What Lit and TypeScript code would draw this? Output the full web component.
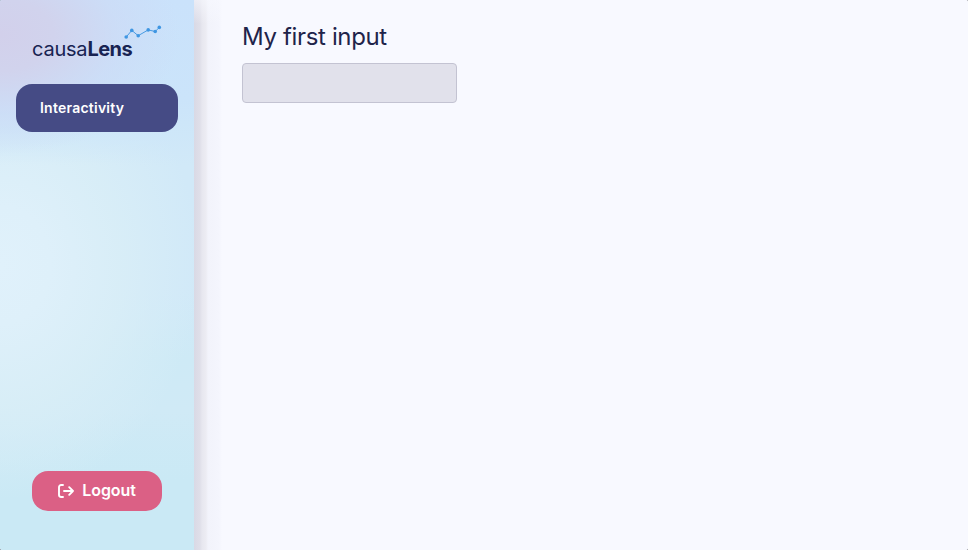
import { LitElement, html, css, svg } from "lit";
import { customElement } from "lit/decorators.js";

const SPARK: Array<[number, number]> = [
  [2.2, 12], [7.8, 5.4], [14.2, 10.7], [24.2, 4.9], [31.2, 6.5], [35.3, 2.4],
];

@customElement("brand-logo")
class BrandLogo extends LitElement {
  static styles = css`
    :host { display: block; position: relative; height: 36px; color: #182352; }
    .word { position: absolute; left: 0; top: 11px; font-size: 20px; line-height: 26px; white-space: nowrap; display: flex; }
    .light { letter-spacing: -0.22px; font-weight: 400; }
    .bold { letter-spacing: -0.55px; font-weight: 700; }
    .spark { position: absolute; left: 92px; top: 0; }
  `;
  render() {
    return html`
      <div class="word"><span class="light">causa</span><span class="bold">Lens</span></div>
      <svg class="spark" width="38" height="15" viewBox="0 0 38 15">
        <polyline points=${SPARK.map((p) => p.join(",")).join(" ")} fill="none" stroke="#489be3" stroke-width="1"></polyline>
        ${SPARK.map(([x, y]) => svg`<circle cx=${x} cy=${y} r="1.8" fill="#3f96e2"></circle>`)}
      </svg>
    `;
  }
}

@customElement("side-bar")
class SideBar extends LitElement {
  static styles = css`
    :host {
      box-sizing: border-box; display: flex; flex-direction: column;
      width: 194px; height: 100%; padding: 25px 16px 39px; flex: none;
      background:
        radial-gradient(ellipse 180px 120px at 0 35px, #d2d0eb 0%, #d1d3ed 30%, rgba(205, 218, 245, 0.65) 65%, rgba(203, 226, 250, 0) 100%),
        linear-gradient(180deg, #cae2fb 0, #cbe4fa 100px, rgba(205, 230, 249, 0.85) 128px, rgba(208, 234, 248, 0) 165px),
        radial-gradient(ellipse 200px 235px at 0 265px, #e0f1fb 0%, #def0fa 25%, rgba(217, 238, 247, 0.85) 60%, rgba(210, 234, 247, 0) 100%),
        linear-gradient(180deg, #d1e9f8 170px, #d1e9f8 290px, #ceeaf6 360px, #d0eaf6 410px, #cae9f5 480px, #cae9f5 550px);
    }
    .logo { margin: 0 16px 23px; }
    .nav {
      height: 48px; border-radius: 16px; background: #454b85; color: #fff;
      display: flex; align-items: center; padding: 0 24px 2px; box-sizing: border-box;
      font-size: 14px; font-weight: 600; letter-spacing: 0.24px;
    }
    .logout {
      margin: auto 16px 0; height: 40px; border-radius: 16px; background: #db6085; color: #fff;
      display: flex; align-items: center; justify-content: center; gap: 8px;
      font-size: 16px; font-weight: 600; letter-spacing: -0.1px;
    }
    .label { line-height: 20px; padding-bottom: 2px; }
  `;
  render() {
    return html`
      <brand-logo class="logo"></brand-logo>
      <div class="nav">Interactivity</div>
      <div class="logout">
        <svg width="16" height="16" viewBox="0 0 16 16" fill="none" stroke="#fff" stroke-width="1.9" stroke-linecap="round" stroke-linejoin="round">
          <path d="M5 2H3.2A2.2 2.2 0 0 0 1 4.2V11.8A2.2 2.2 0 0 0 3.2 14H5"></path>
          <path d="M6 8H15M11.2 4.2L15 8L11.2 11.8"></path>
        </svg>
        <span class="label">Logout</span>
      </div>
    `;
  }
}

@customElement("app-root")
class AppRoot extends LitElement {
  static styles = css`
    :host {
      display: block; width: 100%; height: 100vh; overflow: hidden; background: #55565c;
      font-family: Inter, "Open Sans", sans-serif; color: #1f244a;
    }
    .window { display: flex; height: 100%; border-radius: 2px; overflow: hidden; background: #f8f9ff; }
    .main {
      flex: 1; padding: 21px 48px 20px;
      background:
        linear-gradient(180deg, rgba(248, 249, 255, 0.6), rgba(248, 249, 255, 0) 24px),
        linear-gradient(90deg, #d9d9e5 0, #dfdfe9 6px, #e7e7ef 8px, #ececf3 12px, #f2f3fb 14px, #f4f5fd 25px, #f8f9ff 28px);
    }
    .title { margin: 0 0 10px; font-size: 24px; line-height: 32px; font-weight: 400; letter-spacing: -0.35px; }
    .field {
      display: block; box-sizing: border-box; width: 215px; height: 40px; padding: 0 12px;
      border: 1px solid #c3c3d2; border-radius: 4px; background: #e1e1eb; outline: none;
      font: inherit; font-size: 14px; color: inherit;
    }
  `;
  render() {
    return html`
      <div class="window">
        <side-bar></side-bar>
        <main class="main">
          <h1 class="title">My first input</h1>
          <input class="field" type="text" aria-label="My first input" />
        </main>
      </div>
    `;
  }
}
